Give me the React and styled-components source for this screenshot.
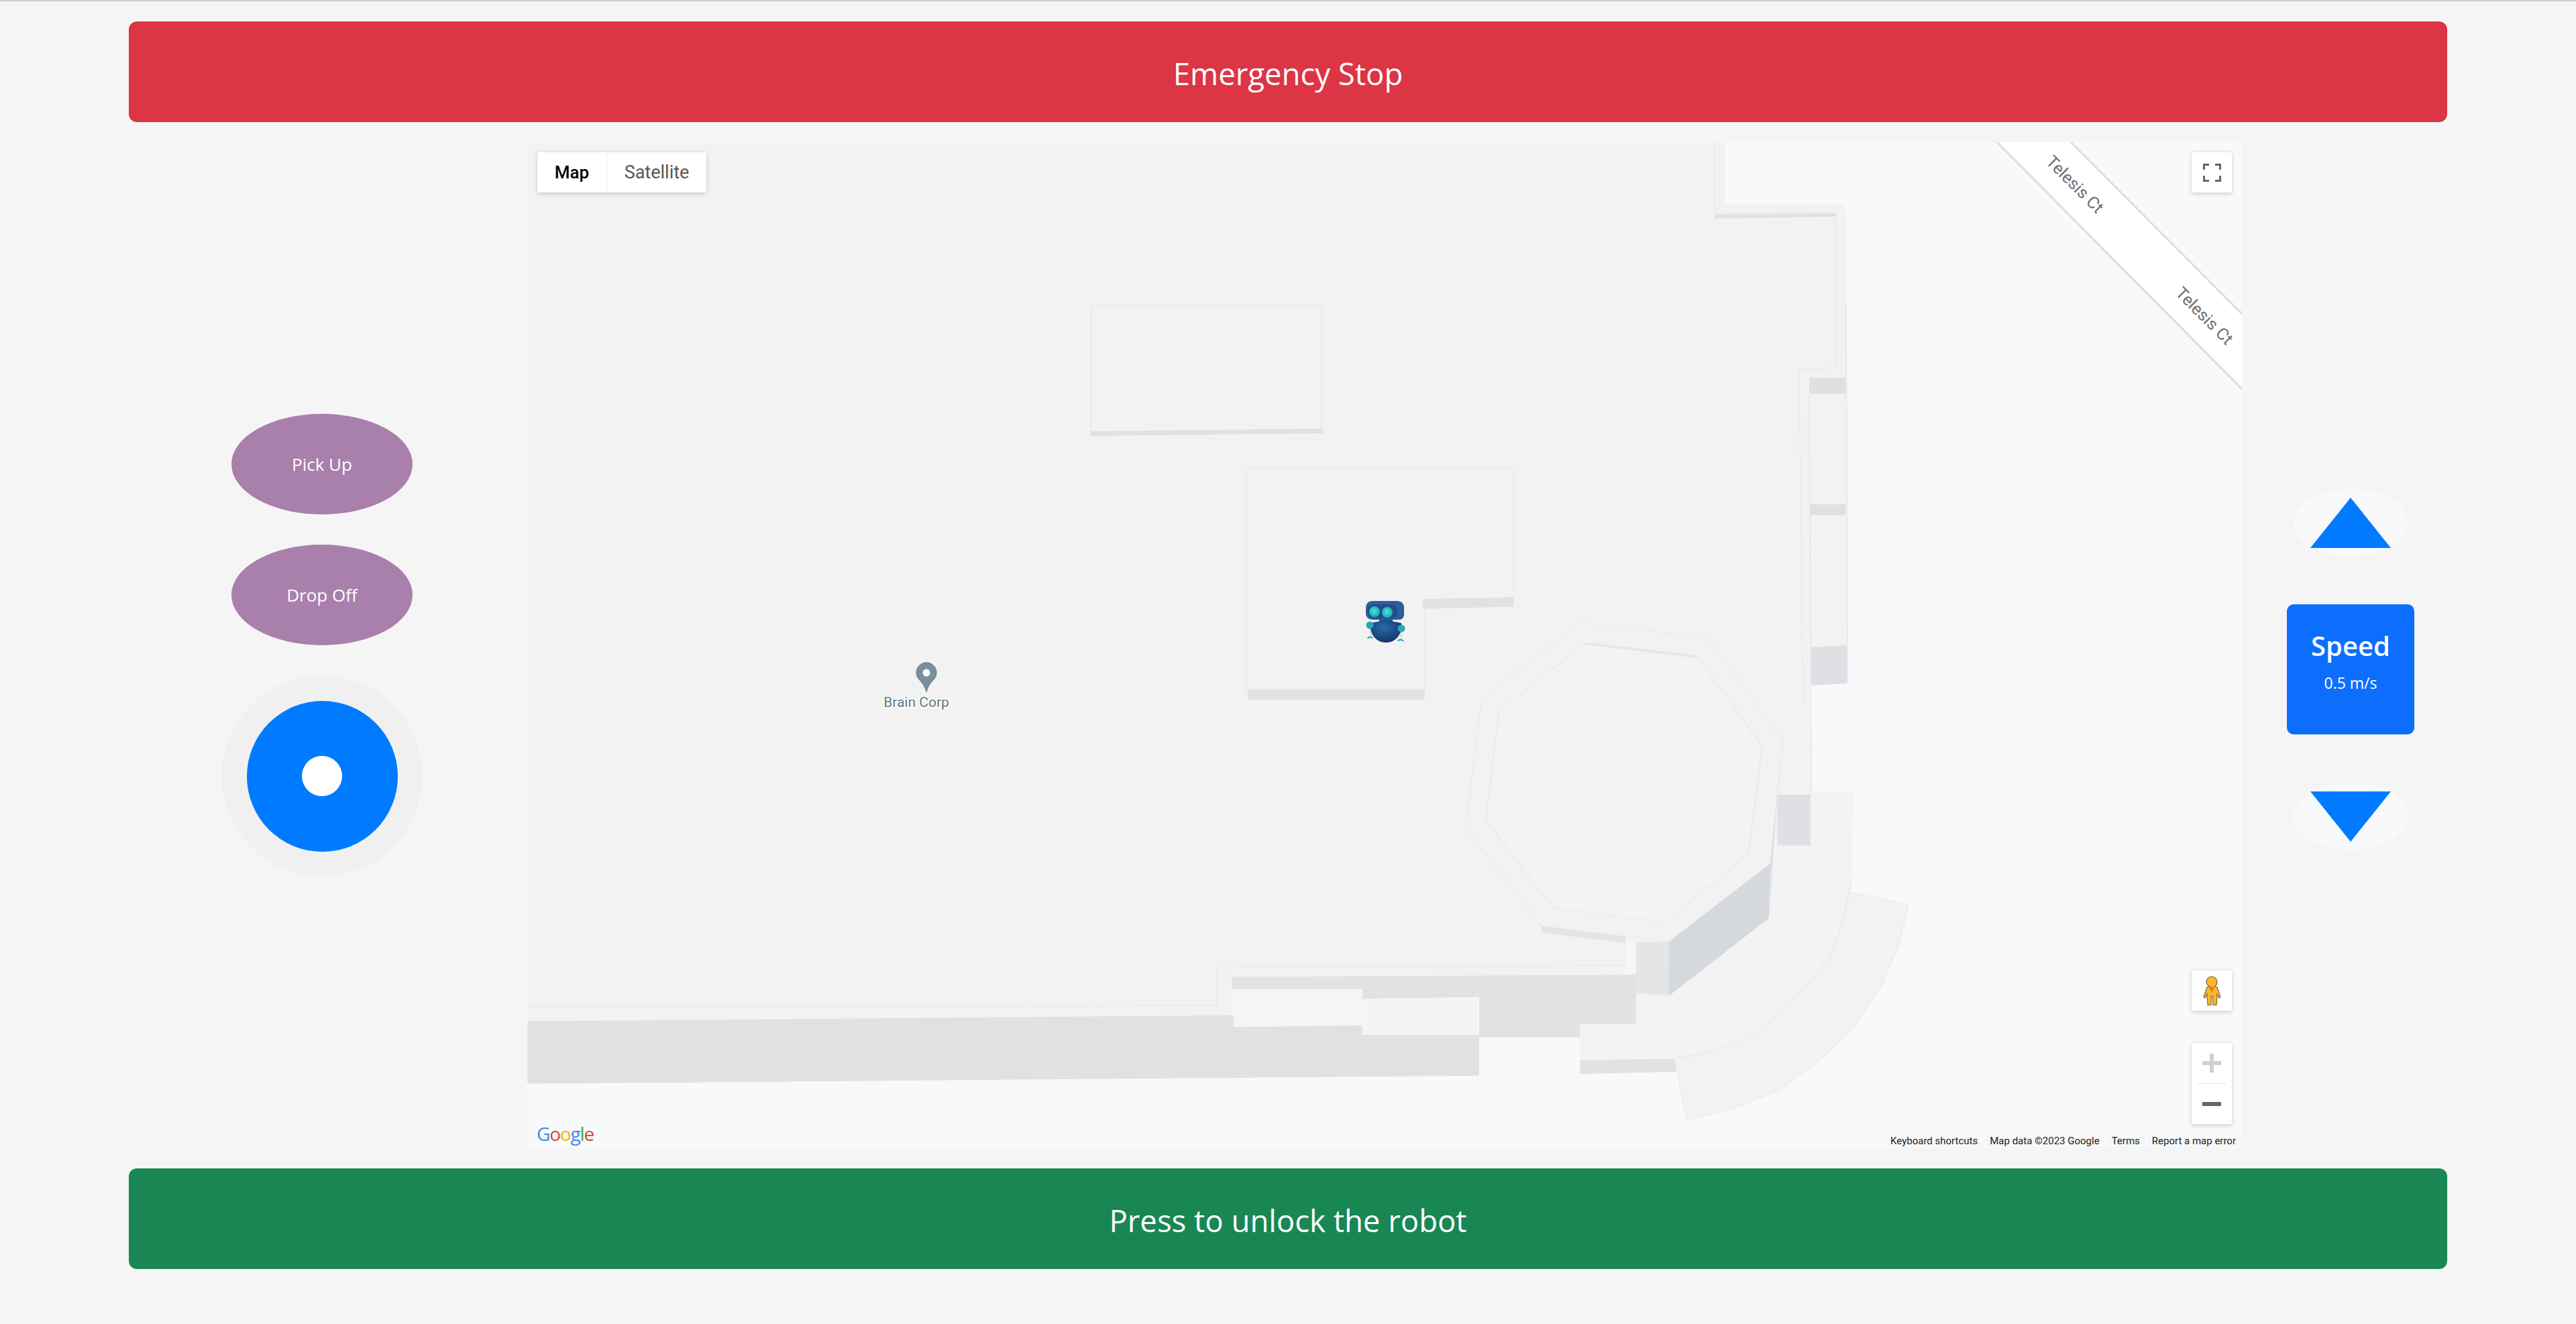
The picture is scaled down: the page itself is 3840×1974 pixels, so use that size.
import React from "react";
import styled, { createGlobalStyle } from "styled-components";

const Global = createGlobalStyle`
  html, body {
    margin: 0;
    background: #f5f5f5;
  }
  * {
    box-sizing: border-box;
  }
`;

const uiFont = `"Open Sans", "Noto Sans", sans-serif`;
const mapFont = `Roboto, "Liberation Sans", sans-serif`;

const Page = styled.div`
  min-height: 1974px;
  border-top: 2px solid #cfcfcf;
  padding: 30px 192px 0;
  display: flex;
  flex-direction: column;
  gap: 30px;
  font-family: ${uiFont};
`;
const WideButton = styled.button`
  height: ${(p) => p.$height}px;
  padding: 3px 0 0;
  border: 0;
  border-radius: 12px;
  color: #fff;
  background: ${(p) => p.$color};
  font-family: ${uiFont};
  font-size: 45.5px;
  text-align: center;
`;
const Main = styled.div`
  height: 1500px;
  display: grid;
  grid-template-columns: 594px 2556px 306px;
`;
const LeftColumn = styled.div`
  padding-right: 18px;
  display: flex;
  flex-direction: column;
  align-items: center;
  justify-content: center;
  gap: 45px;
`;
const ActionButton = styled.button`
  width: 270px;
  height: 150px;
  border: 0;
  border-radius: 50%;
  background: #a97fac;
  color: #fff;
  font-family: ${uiFont};
  font-size: 26px;
`;
const JoystickBase = styled.div`
  width: 300px;
  height: 300px;
  border-radius: 50%;
  background: #f0f0f0;
  display: flex;
  align-items: center;
  justify-content: center;
`;
const JoystickPad = styled.div`
  width: 225px;
  height: 225px;
  border-radius: 50%;
  background: #007bff;
  display: flex;
  align-items: center;
  justify-content: center;
`;
const JoystickKnob = styled.div`
  width: 60px;
  height: 60px;
  border-radius: 50%;
  background: #fff;
`;
const RightColumn = styled.div`
  padding: 72px 0 0 18px;
  display: flex;
  flex-direction: column;
  align-items: center;
  justify-content: center;
  gap: 72px;
`;
const ArrowButton = styled.button`
  width: 170px;
  height: 100px;
  padding: 0;
  border: 0;
  border-radius: 50%;
  background: #f8f9fa;
  display: flex;
  align-items: center;
  justify-content: center;
`;
const Triangle = styled.span`
  width: 0;
  height: 0;
  border-left: 60px solid transparent;
  border-right: 60px solid transparent;
  border-${(p) => (p.$down ? "top" : "bottom")}: 75px solid #007bff;
`;
const SpeedCard = styled.div`
  width: 190px;
  height: 194px;
  padding-top: 36px;
  border-radius: 10px;
  background: #0d6efd;
  color: #fff;
  text-align: center;
`;
const SpeedTitle = styled.div`
  font-size: 40px;
  font-weight: 600;
  line-height: 52px;
`;
const SpeedValue = styled.div`
  margin-top: 13px;
  font-size: 23px;
  line-height: 32px;
`;

const MapFrame = styled.div`
  position: relative;
  overflow: hidden;
  font-family: ${mapFont};
`;
const MapDrawing = styled.svg`
  display: block;
`;
const MapTypes = styled.div`
  position: absolute;
  top: 15px;
  left: 15px;
  height: 60px;
  display: flex;
  background: #fff;
  border-radius: 3px;
  box-shadow: 0 1.5px 6px rgba(0, 0, 0, 0.18);
`;
const MapType = styled.div`
  width: ${(p) => p.$width}px;
  display: flex;
  align-items: center;
  justify-content: center;
  font-size: ${(p) => (p.$active ? 26 : 27)}px;
  color: ${(p) => (p.$active ? "#000" : "#565656")};
  font-weight: ${(p) => (p.$active ? 500 : 400)};
  border-left: ${(p) => (p.$active ? "0" : "1px solid #ececec")};
`;
const MapControl = styled.div`
  position: absolute;
  right: 15px;
  top: ${(p) => p.$top}px;
  width: 60px;
  height: ${(p) => p.$height}px;
  background: #fff;
  border-radius: 3px;
  box-shadow: 0 1.5px 6px rgba(0, 0, 0, 0.18);
  display: flex;
  flex-direction: column;
  align-items: center;
  justify-content: center;
`;
const ZoomPart = styled.div`
  height: 60px;
  display: flex;
  align-items: center;
  justify-content: center;
`;
const ZoomDivider = styled.div`
  width: 45px;
  height: 1px;
  background: #e6e6e6;
`;
const GoogleLogo = styled.div`
  position: absolute;
  left: 14px;
  bottom: 4px;
  font-family: "Open Sans", sans-serif;
  font-size: 28px;
  line-height: 36px;
  letter-spacing: -1.2px;
`;
const LogoLetter = styled.span`
  color: ${(p) => p.$color};
`;
const Attribution = styled.div`
  position: absolute;
  right: 0;
  bottom: 0;
  height: 21px;
  display: flex;
  gap: 3px;
`;
const AttributionItem = styled.div`
  padding: 0 ${(p) => p.$pad || 8}px 0 7px;
  background: rgba(245, 246, 248, 0.7);
  color: #222;
  font-size: 15px;
  line-height: 21px;
  white-space: nowrap;
`;

const STREET = { fontSize: 25, fill: "#6b6f74", textAnchor: "middle", dominantBaseline: "central" };

function FloorPlan() {
  return (
    <MapDrawing width="2556" height="1500" viewBox="786 212 2556 1500">
      <defs>
        <radialGradient id="robotBlue" cx="45%" cy="30%" r="75%">
          <stop offset="0%" stopColor="#2a6aa6" />
          <stop offset="100%" stopColor="#0e3266" />
        </radialGradient>
        <radialGradient id="robotEye" cx="45%" cy="45%" r="60%">
          <stop offset="0%" stopColor="#4fe0dc" />
          <stop offset="100%" stopColor="#17a5ad" />
        </radialGradient>
      </defs>
      <rect x="786" y="212" width="2556" height="1500" fill="#f8f9fb" />

      {/* street */}
      <polygon points="2977,212 3087,212 3342,468 3342,580" fill="#fff" />
      <path d="M2977 212 3342 580M3087 212 3342 468" stroke="#dcdde0" strokeWidth="3" fill="none" />
      <text {...STREET} transform="rotate(45 3093 275)" x="3093" y="275">Telesis Ct</text>
      <text {...STREET} transform="rotate(45 3286 471)" x="3286" y="471">Telesis Ct</text>

      {/* main building */}
      <polygon
        points="786,212 2572,212 2572,305 2751,305 2754,962 2754,1019 2700,1022 2699,1182 2699,1261 2649,1261 2637,1369 2488,1485 2439,1480 2439,1404 2424,1401 2424,1453 1836,1456 1838,1513 786,1523"
        fill="#f2f2f2"
      />
      <path d="M2556 212V318L2736 318V548L2682 551L2688 1050" stroke="#ececec" strokeWidth="2" fill="none" />
      <path d="M786 1502 1814 1499V1443L2424 1439" stroke="#ececec" strokeWidth="2" fill="none" />
      <polygon points="2556,320 2736,318 2736,323 2556,326" fill="#e0e1e4" />
      <polygon points="2697,563 2751,563 2751,587 2697,587" fill="#dfe0e4" />
      <polygon points="2699,752 2751,752 2751,768 2699,768" fill="#dfe0e4" />
      <polygon points="2700,965 2754,962 2754,1019 2700,1022" fill="#dfe0e3" />
      <path d="M2752 450 2754 962M2697 587 2700 1182" stroke="#e4e5e7" strokeWidth="1.500" fill="none" />

      {/* rooms */}
      <polygon points="1626,455 1970,455 1970,640 1626,645" fill="none" stroke="#ececec" strokeWidth="2" />
      <polygon points="1626,643 1972,639 1972,646 1626,650" fill="#e0e1e4" />
      <polygon points="1858,698 2256,698 2256,892 2124,900 2124,1028 1858,1028" fill="none" stroke="#ececec" strokeWidth="2" />

      <g transform="translate(1700 880) scale(0.8292 0.523)">
        <polygon points="193,283 511,283 511,312 193,312" fill="#e1e2e5" />
        <polygon points="508,25 671,20 671,47 508,53" fill="#dfe1e2" />

        {/* lower bands */}
        <polygon points="-1102,1229 167,1211 168,1245 399,1240 399,1267 609,1267 609,1384 -1102,1407" fill="#e0e1e3" />
        <polygon
          points="164,1102 873,1096 891,1093 891,1238 790,1238 790,1275 609,1275 609,1160 399,1165 399,1137 164,1137"
          fill="#e1e2e4"
        />
        <polygon points="165,1137 399,1137 399,1240 168,1245" fill="#f5f5f5" />
        <polygon points="399,1165 609,1160 609,1267 399,1267" fill="#f4f4f4" />

        {/* octagon */}
        <polygon
          points="790,91 1018,136 1155,428 1132,780 950,1002 720,957 585,677 613,312"
          fill="#f2f2f2"
          stroke="#ebebeb"
          strokeWidth="2"
        />
        <polygon
          points="800,150 1000,190 1118,443 1093,752 940,946 743,906 621,655 645,345"
          fill="#f3f3f3"
          stroke="#e9e9e9"
          strokeWidth="2"
        />
        <polygon points="800,148 1000,186 1000,193 800,155" fill="#e6e6e7" />
        <polygon points="720,957 873,987 873,1006 722,976" fill="#e3e4e5" />
        <polygon points="873,997 891,1003 891,1093 873,1096" fill="#f6f6f6" />
        <polygon points="891,1003 950,1002 950,1157 891,1148" fill="#e4e5e6" />
        <polygon points="950,1002 1132,780 1130,935 950,1157" fill="#d5d8dc" />
        <polygon points="1155,428 1145,583 1130,935 1132,780" fill="#dfe0e3" />
        <polygon points="1145,583 1205,583 1205,728 1145,728" fill="#dfe0e5" />

        {/* curved wings */}
        <polygon
          points="1205,577 1282,577 1278,830 1262,950 1240,1040 1200,1125 1148,1210 1092,1275 1030,1315 960,1335 790,1340 790,1238 891,1238 891,1148 950,1157 1130,935 1145,728 1205,728"
          fill="#f3f3f3"
        />
        <polyline points="1278,830 1262,950 1240,1040 1200,1125 1148,1210 1092,1275 1030,1315 960,1335" fill="none" stroke="#e2e2e2" strokeWidth="2" />
        <polygon points="790,1340 960,1335 964,1373 790,1379" fill="#e1e2e4" />
        <polygon
          points="1275,860 1380,895 1366,1000 1333,1125 1283,1247 1217,1345 1145,1430 1055,1483 982,1510 961,1342 1030,1315 1092,1275 1148,1210 1200,1125 1240,1040 1262,950"
          fill="#f2f2f2"
          stroke="#ebebeb"
          strokeWidth="2"
        />
      </g>

      {/* place pin */}
      <path
        d="M1381 1032c-2-9-6-13-10-18a15 15 0 1 1 20 0c-4 5-8 9-10 18z"
        fill="#78909c"
        stroke="#64777f"
        strokeWidth="1"
      />
      <circle cx="1381" cy="1003" r="5.5" fill="#fff" />
      <text
        x="1366"
        y="1054"
        fontSize="21"
        fill="#5f7583"
        textAnchor="middle"
        stroke="#fff"
        strokeWidth="3"
        paintOrder="stroke"
      >
        Brain Corp
      </text>

      {/* robot marker */}
      <path d="M2042 938 2044 951M2088 938 2089 953" stroke="#d5d8d8" strokeWidth="2" />
      <path d="M2039 952c1-3 5-3 7 0M2084 956c1-3 6-3 8 0" stroke="#23a0a8" strokeWidth="2" fill="none" />
      <rect x="2056" y="922" width="20" height="10" fill="#1b4f87" />
      <path d="M2043 929c14-4 32-4 46 0 2 16-8 29-23 29s-25-13-23-29z" fill="url(#robotBlue)" />
      <circle cx="2042" cy="932" r="5.5" fill="#23aab2" />
      <circle cx="2089" cy="937" r="5.5" fill="#23aab2" />
      <path d="M2046 896h36c7 0 11 4 11 10v10c0 5-3 8-8 8h-38c-7 0-11-4-11-9v-9c0-6 4-10 10-10z" fill="#2a5f9c" />
      <rect x="2039" y="901" width="44" height="21" rx="9" fill="#1f4f8a" />
      <circle cx="2049" cy="912" r="8" fill="url(#robotEye)" />
      <circle cx="2068" cy="913" r="8" fill="url(#robotEye)" />
    </MapDrawing>
  );
}

function FullscreenIcon() {
  return (
    <svg width="27" height="27" viewBox="0 0 27 27" fill="none" stroke="#666" strokeWidth="3">
      <path d="M1.5 9V1.5H9M18 1.5H25.5V9M25.5 18V25.5H18M9 25.5H1.5V18" />
    </svg>
  );
}

function Pegman() {
  return (
    <svg width="27" height="45" viewBox="0 0 27 45">
      <path
        d="M13 1c4.500 0 8 3.500 8 8 0 3-1.600 5.300-3.600 6.600L21 17l5 14-2 2-3-6-1 16.500h-5L14.500 30h-2L12 43.500H7L6 27l-3 6-2-2 5-14 3.600-1.400C7.600 14.300 5 12 5 9c0-4.500 3.500-8 8-8z"
        fill="#fdb72c"
        stroke="#7a6a3c"
        strokeWidth="1.200"
      />
      <path d="M8.500 16.500h9L13 25z" fill="#de7b2a" />
    </svg>
  );
}

function ZoomIcon({ minus, color }) {
  return (
    <svg width="28" height="28" viewBox="0 0 28 28" fill={color}>
      <rect x="0" y="11" width="28" height="6" />
      {!minus && <rect x="11" y="0" width="6" height="28" />}
    </svg>
  );
}

function App() {
  return (
    <Page>
      <Global />
      <WideButton $color="#dc3545" $height={150}>Emergency Stop</WideButton>
      <Main>
        <LeftColumn>
          <ActionButton>Pick Up</ActionButton>
          <ActionButton>Drop Off</ActionButton>
          <JoystickBase>
            <JoystickPad>
              <JoystickKnob />
            </JoystickPad>
          </JoystickBase>
        </LeftColumn>
        <MapFrame>
          <FloorPlan />
          <MapTypes>
            <MapType $active $width={103}>Map</MapType>
            <MapType $width={149}>Satellite</MapType>
          </MapTypes>
          <MapControl $top={15} $height={60}>
            <FullscreenIcon />
          </MapControl>
          <MapControl $top={1235} $height={60}>
            <Pegman />
          </MapControl>
          <MapControl $top={1343} $height={121}>
            <ZoomPart><ZoomIcon color="#d0d0d0" /></ZoomPart>
            <ZoomDivider />
            <ZoomPart><ZoomIcon minus color="#666" /></ZoomPart>
          </MapControl>
          <GoogleLogo>
            <LogoLetter $color="#4285f4">G</LogoLetter>
            <LogoLetter $color="#db4437">o</LogoLetter>
            <LogoLetter $color="#f4b400">o</LogoLetter>
            <LogoLetter $color="#4285f4">g</LogoLetter>
            <LogoLetter $color="#34a853">l</LogoLetter>
            <LogoLetter $color="#db4437">e</LogoLetter>
          </GoogleLogo>
          <Attribution>
            <AttributionItem>Keyboard shortcuts</AttributionItem>
            <AttributionItem>Map data ©2023 Google</AttributionItem>
            <AttributionItem>Terms</AttributionItem>
            <AttributionItem $pad={9}>Report a map error</AttributionItem>
          </Attribution>
        </MapFrame>
        <RightColumn>
          <ArrowButton><Triangle /></ArrowButton>
          <SpeedCard>
            <SpeedTitle>Speed</SpeedTitle>
            <SpeedValue>0.5 m/s</SpeedValue>
          </SpeedCard>
          <ArrowButton><Triangle $down /></ArrowButton>
        </RightColumn>
      </Main>
      <WideButton $color="#198754" $height={150}>Press to unlock the robot</WideButton>
    </Page>
  );
}

export default App;
